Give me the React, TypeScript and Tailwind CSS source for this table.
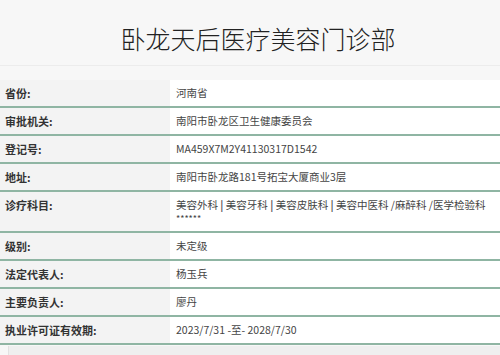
import React from 'react';

const rows: { label: string; value: React.ReactNode; tall?: boolean }[] = [
  { label: '省份:', value: '河南省' },
  { label: '审批机关:', value: '南阳市卧龙区卫生健康委员会' },
  { label: '登记号:', value: 'MA459X7M2Y41130317D1542' },
  { label: '地址:', value: '南阳市卧龙路181号拓宝大厦商业3层' },
  {
    label: '诊疗科目:',
    tall: true,
    value: (
      <>
        <div>
          美容外科 <b className="font-bold text-[#555]">|</b> 美容牙科 <b className="font-bold text-[#555]">|</b> 美容皮肤科{' '}
          <b className="font-bold text-[#555]">|</b> 美容中医科 /麻醉科 /医学检验科
        </div>
        <div className="text-[9px] leading-[14px]">******</div>
      </>
    ),
  },
  { label: '级别:', value: '未定级' },
  { label: '法定代表人:', value: '杨玉兵' },
  { label: '主要负责人:', value: '廖丹' },
  { label: '执业许可证有效期:', value: '2023/7/31 -至- 2028/7/30' },
];

export default function App() {
  return (
    <div className="w-[500px] h-[355px] overflow-hidden bg-[#f7f7f7] font-['Noto_Sans_CJK_SC','Noto_Sans',sans-serif]">
      <header className="h-[66px] border-b border-[#ececec] flex items-center justify-center pl-[16px]">
        <h1 className="text-[25px] font-light text-[#222] mt-[12px]">卧龙天后医疗美容门诊部</h1>
      </header>

      <div className="mt-[14px]">
        {rows.map((r) => (
          <div
            key={r.label}
            className={`grid grid-cols-[170px_1fr] border-b-2 border-[#8fb5a3] ${r.tall ? 'h-[41px]' : 'h-[28px]'}`}
          >
            <div
              className={`bg-[#f3f3f3] pl-[5px] text-[11px] font-bold text-[#333] ${
                r.tall ? 'pt-[6px] leading-[14px]' : 'flex items-center'
              }`}
            >
              {r.label}
            </div>
            <div
              className={`bg-white pl-[6px] text-[10.5px] text-[#444] ${
                r.tall ? 'pt-[6px] leading-[14px]' : 'flex items-center'
              }`}
            >
              {r.value}
            </div>
          </div>
        ))}
        <div className="ml-[8px] mt-[1px] h-[10px] bg-[#efefef] border-l border-[#e2e2e2]" />
      </div>
    </div>
  );
}
